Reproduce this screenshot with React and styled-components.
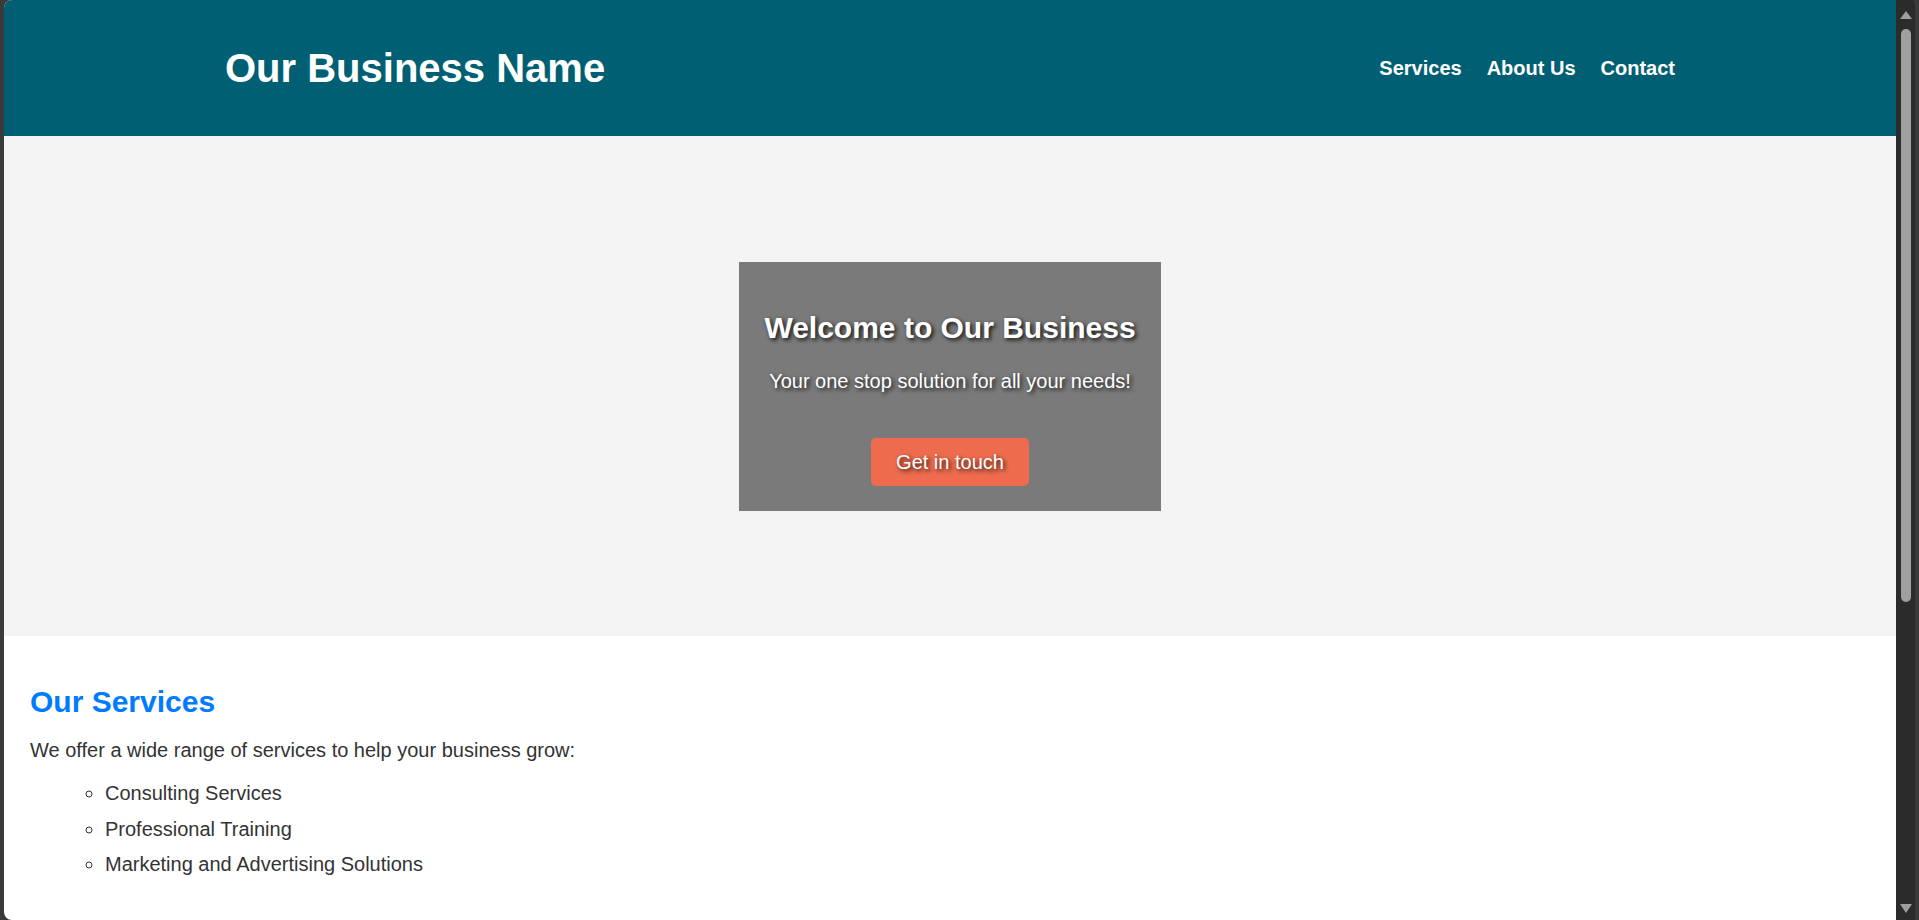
import React from 'react'
import styled, { createGlobalStyle } from 'styled-components'

const teal = '#005f73'
const coral = '#ee6c4d'
const frame = '#3a3a3a'

const GlobalStyle = createGlobalStyle`
  html, body {
    margin: 0;
    height: 100%;
    overflow: hidden;
  }

  body {
    background: ${frame};
    font-family: "Liberation Sans", Arial, sans-serif;
    color: #333;
  }

  * {
    box-sizing: border-box;
  }
`

const Window = styled.div`
  display: flex;
  height: 100vh;
  padding-left: 4px;
`

const Viewport = styled.div`
  flex: 1;
  min-width: 0;
  overflow: hidden;
  background: #fff;
  border-radius: 8px 0 0 8px;
`

const ScrollTrack = styled.div`
  width: 23px;
  display: flex;
  flex-direction: column;
  align-items: center;
  background: #2b2b2b;
  border-right: 4px solid ${frame};
  border-top-right-radius: 6px;
`

const Arrow = styled.span`
  width: 0;
  height: 0;
  border-left: 6.5px solid transparent;
  border-right: 6.5px solid transparent;
  ${props => (props.down
    ? `border-top: 9px solid #9e9e9e; margin: auto 0 7px;`
    : `border-bottom: 8px solid #9e9e9e; margin-top: 11px;`)}
`

const Thumb = styled.div`
  width: 10px;
  height: 573px;
  margin-top: 10px;
  border-radius: 5px;
  background: #a0a0a0;
`

const Header = styled.header`
  height: 136px;
  display: flex;
  align-items: center;
  background: ${teal};
`

const Container = styled.div`
  width: 1450px;
  margin: 0 auto;
  display: flex;
  align-items: center;
  justify-content: space-between;
`

const Brand = styled.h1`
  margin: 0;
  font-size: 40px;
  font-weight: 700;
  color: #fff;
`

const NavList = styled.ul`
  display: flex;
  gap: 25px;
  margin: 0;
  padding: 0;
  list-style: none;
`

const NavLink = styled.a`
  font-size: 20px;
  font-weight: 700;
  color: #fff;
  text-decoration: none;
`

const Hero = styled.section`
  height: 500px;
  display: flex;
  align-items: center;
  justify-content: center;
  background: #f4f4f4;
`

// the card sizes itself from the heading width
const HeroCard = styled.div`
  display: flex;
  flex-direction: column;
  align-items: center;
  padding: 25px;
  background: rgba(0, 0, 0, 0.5);
  color: #fff;
  text-align: center;
  text-shadow: 2px 2px 4px rgba(0, 0, 0, 0.85);
`

const HeroTitle = styled.h2`
  margin: 24px 0 25px;
  font-size: 30px;
  font-weight: 700;
`

const Tagline = styled.p`
  margin: 0 0 45px;
  font-size: 20px;
`

const CtaButton = styled.button`
  padding: 12px 25px;
  border: none;
  border-radius: 5px;
  background: ${coral};
  color: #fff;
  font-family: inherit;
  font-size: 20px;
  line-height: 24px;
  text-shadow: inherit;
  cursor: pointer;
`

const Services = styled.section`
  padding: 25px 25px 25px 26px;
`

const SectionTitle = styled.h2`
  margin: 24px 0 20px;
  font-size: 30px;
  font-weight: 700;
  color: #007bff;
`

const Intro = styled.p`
  margin: 0 0 20px;
  font-size: 20px;
`

const ServiceList = styled.ul`
  margin: 0 0 0 25px;
  padding-left: 50px;
  list-style: circle;
`

const ServiceItem = styled.li`
  font-size: 20px;
  line-height: 23px;
  margin-bottom: 12.7px;
`

const services = [
  'Consulting Services',
  'Professional Training',
  'Marketing and Advertising Solutions',
]

const App = () => (
  <>
    <GlobalStyle />
    <Window>
      <Viewport>
        <Header>
          <Container>
            <Brand>Our Business Name</Brand>
            <nav>
              <NavList>
                <li><NavLink href="#services">Services</NavLink></li>
                <li><NavLink href="#about">About Us</NavLink></li>
                <li><NavLink href="#contact">Contact</NavLink></li>
              </NavList>
            </nav>
          </Container>
        </Header>

        <Hero>
          <HeroCard>
            <HeroTitle>Welcome to Our Business</HeroTitle>
            <Tagline>Your one stop solution for all your needs!</Tagline>
            <CtaButton type="button">Get in touch</CtaButton>
          </HeroCard>
        </Hero>

        <Services id="services">
          <SectionTitle>Our Services</SectionTitle>
          <Intro>We offer a wide range of services to help your business grow:</Intro>
          <ServiceList>
            {services.map(s => (
              <ServiceItem key={s}>{s}</ServiceItem>
            ))}
          </ServiceList>
        </Services>
      </Viewport>

      <ScrollTrack>
        <Arrow />
        <Thumb />
        <Arrow down />
      </ScrollTrack>
    </Window>
  </>
)

export default App
